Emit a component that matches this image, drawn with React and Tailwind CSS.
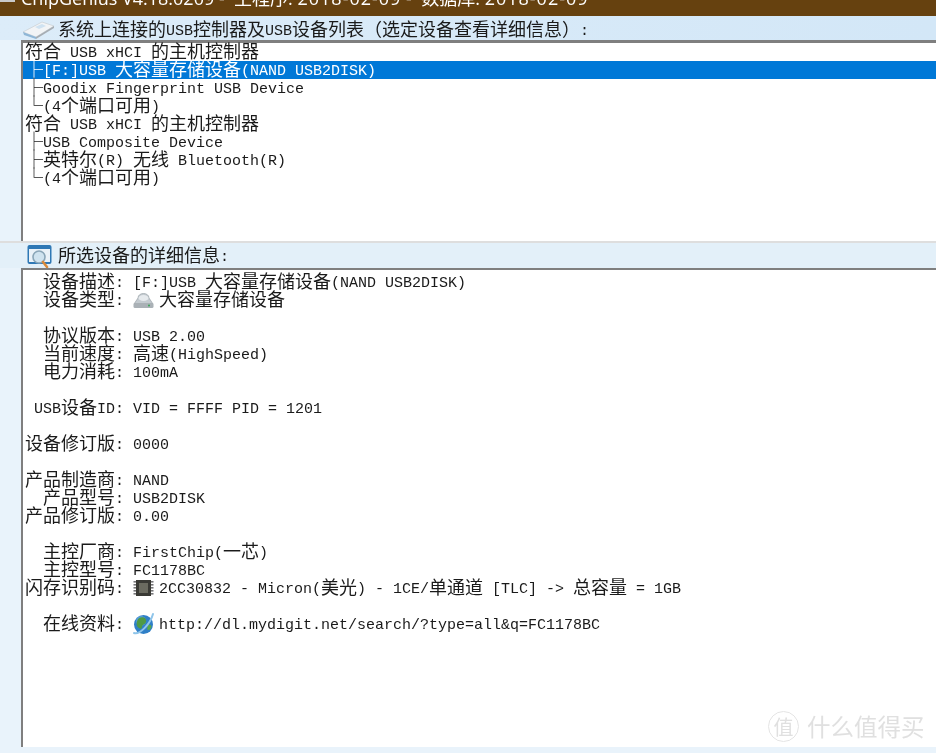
import React from "react";

function Mixed({ text }) {
  const parts = text.split(/([\u2500-\u257F\u2E80-\uFFEF]+)/).filter(Boolean);
  return (
    <span className="whitespace-pre">
      {parts.map((p, i) =>
        /[\u2500-\u257F\u2E80-\uFFEF]/.test(p) ? (
          <span key={i} className="font-['Noto_Sans_CJK_SC','Liberation_Sans',sans-serif] text-[18px] leading-[18px]">{p}</span>
        ) : (
          <span key={i} className="font-['Liberation_Mono',monospace] text-[15px] leading-[18px] align-[1px]">{p}</span>
        )
      )}
    </span>
  );
}

const UsbIcon = () => (
  <svg width="33" height="18" viewBox="0 0 33 18" className="shrink-0">
    <path d="M1 11 L20 1 L32 5 L14 16 Z" fill="#f2f4f6" stroke="#c9ced3" strokeWidth="0.7" />
    <path d="M1 11 L14 16 L14 18 L2 14 Z" fill="#8fb6d6" />
    <path d="M14 16 L32 5 L32 7 L14 18 Z" fill="#a7adb3" />
    <path d="M13 6 L20 3 L24 5 L17 8 Z" fill="#cfe2f1" />
  </svg>
);

const WindowIcon = () => (
  <svg width="25" height="24" viewBox="0 0 25 24" className="shrink-0">
    <rect x="0.5" y="1" width="24" height="19" rx="2" fill="#2f78b5" />
    <rect x="2" y="5" width="21" height="13" fill="#eaf2f8" />
    <circle cx="12" cy="13" r="6" fill="#cfe3ef" stroke="#8aa6b8" strokeWidth="1.6" />
    <path d="M16 18 L20 23" stroke="#d98a3a" strokeWidth="2.6" strokeLinecap="round" />
  </svg>
);

const DriveIcon = () => (
  <svg width="21" height="18" viewBox="0 0 21 18">
    <path d="M5 7 C5 1 16 1 16 7 L20 13 L1 13 Z" fill="#c4cbd0" stroke="#9aa2a8" strokeWidth="0.7" />
    <ellipse cx="10.5" cy="7" rx="5" ry="3" fill="#e6eaed" />
    <rect x="0.5" y="12" width="20" height="5" rx="1.5" fill="#aab1b6" />
    <circle cx="16" cy="14.5" r="1" fill="#3aa655" />
  </svg>
);

const ChipIcon = () => (
  <svg width="21" height="18" viewBox="0 0 21 18">
    <rect x="3" y="1" width="15" height="16" fill="#3a3a35" />
    <rect x="6" y="4" width="9" height="10" fill="#6b6b60" />
    {[2, 5, 8, 11, 14].map((y) => (
      <g key={y}>
        <rect x="0.5" y={y} width="2.5" height="1.6" fill="#77777a" />
        <rect x="18" y={y} width="2.5" height="1.6" fill="#77777a" />
      </g>
    ))}
  </svg>
);

const GlobeIcon = () => (
  <svg width="21" height="24" viewBox="0 0 21 24" className="overflow-visible">
    <circle cx="10.5" cy="12.5" r="9.5" fill="#2f7fc7" />
    <circle cx="8" cy="9" r="5" fill="#6cb1e4" opacity="0.6" />
    <path d="M6 6 C10 4 14 6 13 10 C12 13 9 12 9 15 C9 18 6 17 4 14 C3 11 4 8 6 6 Z" fill="#4f9a45" />
    <path d="M15 13 C18 12 19 14 18 16 C17 18 15 19 14 17 Z" fill="#5aa84d" />
    <path d="M1 21 C6 23 17 13 20 2" fill="none" stroke="#8fc5ea" strokeWidth="2" strokeLinecap="round" />
  </svg>
);

const tree = [
  "符合 USB xHCI 的主机控制器",
  "├[F:]USB 大容量存储设备(NAND USB2DISK)",
  "├Goodix Fingerprint USB Device",
  "└(4个端口可用)",
  "符合 USB xHCI 的主机控制器",
  "├USB Composite Device",
  "├英特尔(R) 无线 Bluetooth(R)",
  "└(4个端口可用)",
];

const details = [
  ["设备描述:", "[F:]USB 大容量存储设备(NAND USB2DISK)"],
  ["设备类型:", "大容量存储设备", DriveIcon],
  null,
  ["协议版本:", "USB 2.00"],
  ["当前速度:", "高速(HighSpeed)"],
  ["电力消耗:", "100mA"],
  null,
  ["USB设备ID:", "VID = FFFF PID = 1201"],
  null,
  ["设备修订版:", "0000"],
  null,
  ["产品制造商:", "NAND"],
  ["产品型号:", "USB2DISK"],
  ["产品修订版:", "0.00"],
  null,
  ["主控厂商:", "FirstChip(一芯)"],
  ["主控型号:", "FC1178BC"],
  ["闪存识别码:", "2CC30832 - Micron(美光) - 1CE/单通道 [TLC] -> 总容量 = 1GB", ChipIcon],
  null,
  ["在线资料:", "http://dl.mydigit.net/search/?type=all&q=FC1178BC", GlobeIcon],
];

export default function App() {
  return (
    <div className="relative w-[936px] h-[753px] overflow-hidden flex flex-col bg-[#e9f3fb] text-[#1a1a1a]">
      <div className="h-4 shrink-0 bg-[#66410f] overflow-hidden flex items-start gap-[6px]">
        <div className="w-[15px] h-[2px] bg-[#c9c9c9]" />
        <div className="-mt-[11px] text-white text-[18px] leading-[18px] whitespace-pre font-['Open_Sans','Noto_Sans_CJK_SC',sans-serif] blur-[0.3px]">
          ChipGenius V4.18.0209 -  主程序: <span className="tracking-[1px]">2018-02-09</span> -  数据库: <span className="tracking-[1px]">2018-02-09</span>
        </div>
      </div>

      <div className="flex-1 min-h-0 pl-[21px] flex flex-col">
        <div className="h-[24px] shrink-0 -ml-[21px] pl-[22px] pt-[4px] bg-gradient-to-r from-[#dcecf9] to-[#d3e7f7] flex items-center gap-[3px]">
          <UsbIcon />
          <div className="blur-[0.4px]"><Mixed text="系统上连接的USB控制器及USB设备列表（选定设备查看详细信息）:" /></div>
        </div>

        <div className="h-[201px] shrink-0 bg-white border-t-[3px] border-l-2 border-[#7f7f7f]">
          {tree.map((t, i) => (
            <div key={i} className={`h-[18px] pl-[2px] flex items-center ${i === 1 ? "bg-[#0078d7] text-white" : ""}`}>
              <div className="blur-[0.4px]"><Mixed text={t} /></div>
            </div>
          ))}
        </div>

        <div className="h-[27px] shrink-0 border-t-2 border-[#dedede] -ml-[21px] pl-[27px] bg-[#e3f0f9] flex items-center gap-[6px]">
          <WindowIcon />
          <div className="blur-[0.4px]"><Mixed text="所选设备的详细信息:" /></div>
        </div>

        <div className="h-[479px] shrink-0 bg-white border-t-2 border-l-2 border-[#7f7f7f] pt-[3px] flex flex-col">
          {details.map((d, i) =>
            d ? (
              <div key={i} className="h-[18px] shrink-0 flex items-center gap-[9px]">
                <div className="w-[101px] shrink-0 text-right blur-[0.4px]"><Mixed text={d[0]} /></div>
                {d[2] ? (
                  <div className="flex items-center gap-[5px]">
                    {React.createElement(d[2])}
                    <div className="blur-[0.4px]"><Mixed text={d[1]} /></div>
                  </div>
                ) : (
                  <div className="blur-[0.4px]"><Mixed text={d[1]} /></div>
                )}
              </div>
            ) : (
              <div key={i} className="h-[18px] shrink-0" />
            )
          )}
        </div>
      </div>

      <div className="absolute left-[768px] top-[711px] flex items-center gap-[8px] text-[#e0e0e0] blur-[0.3px]">
        <div className="w-[31px] h-[31px] rounded-full border border-[#e4e4e4] flex items-center justify-center text-[20px] leading-none font-['Noto_Sans_CJK_SC',sans-serif]">值</div>
        <div className="text-[23.5px] leading-[31px] font-['Noto_Sans_CJK_SC',sans-serif] whitespace-pre">什么值得买</div>
      </div>
    </div>
  );
}
